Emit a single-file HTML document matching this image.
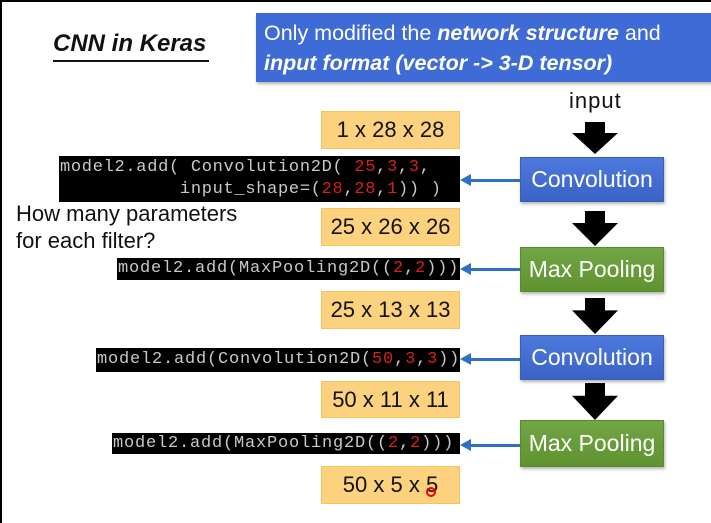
<!DOCTYPE html>
<html><head><meta charset="utf-8"><style>
body{margin:0;width:711px;height:523px;overflow:hidden;background:#fff;position:relative;font-family:"Liberation Sans",sans-serif}
.a{position:absolute}
.or{position:absolute;left:321px;width:139px;background:#fdd27e;border:1px solid #f6c45e;box-sizing:border-box;font-size:22px;color:#111;display:flex;align-items:center;justify-content:center}
.bx{position:absolute;left:520px;width:144px;box-sizing:border-box;color:#fff;font-size:23px;display:flex;align-items:center;justify-content:center;box-shadow:1px 2px 3px rgba(0,0,0,.3)}
.bl{background:linear-gradient(#4d78dc,#3a63c8);border:1px solid #3a5fb8}
.gr{background:linear-gradient(#72a543,#5f9331);border:1px solid #5a8a30}
.cd{position:absolute;background:#000;color:#c8c8c8;font-family:"Liberation Mono",monospace;font-size:17px;white-space:pre;right:251px;box-sizing:border-box;padding-left:1px;letter-spacing:.7px}
.r{color:#d8201c}
.ar{position:absolute;left:572px;width:46px}
.ln{position:absolute;left:466px;width:54px;height:3px;background:#2f6fc6}
.lh{position:absolute;left:460px;width:0;height:0;border-top:6px solid transparent;border-bottom:6px solid transparent;border-right:11px solid #2f6fc6}
</style></head><body>
<div class="a" style="left:0;top:0;width:2px;height:523px;background:#000"></div>
<div class="a" style="left:0;top:0;width:711px;height:2px;background:#000"></div>
<div class="a" style="left:53px;top:30px;font-size:24px;font-weight:bold;font-style:italic;color:#111;white-space:nowrap">CNN in Keras</div>
<div class="a" style="left:53px;top:60px;width:156px;height:2px;background:#111"></div>
<div class="a" style="left:256px;top:13px;width:460px;height:69px;background:#3f6bd6;box-shadow:1px 2px 3px rgba(0,0,0,.3)"></div>
<div class="a" style="left:264px;top:18px;color:#fff;font-size:21.5px;line-height:30px;white-space:nowrap">Only modified the <b><i>network structure</i></b> and<br><b><i>input format (vector -&gt; 3-D tensor)</i></b></div>
<div class="a" style="left:569px;top:88px;font-size:22px;letter-spacing:1px;color:#111">input</div>

<svg class="ar" style="top:122px" height="32" viewBox="0 0 46 32"><path d="M13 0H33V11H46L23 32L0 11H13Z" fill="#000"/></svg>
<svg class="ar" style="top:211px" height="35" viewBox="0 0 46 32" preserveAspectRatio="none"><path d="M13 0H33V11H46L23 32L0 11H13Z" fill="#000"/></svg>
<svg class="ar" style="top:298px" height="36" viewBox="0 0 46 32" preserveAspectRatio="none"><path d="M13 0H33V11H46L23 32L0 11H13Z" fill="#000"/></svg>
<svg class="ar" style="top:383px" height="37" viewBox="0 0 46 32" preserveAspectRatio="none"><path d="M13 0H33V11H46L23 32L0 11H13Z" fill="#000"/></svg>

<div class="bx bl" style="top:157px;height:45px">Convolution</div>
<div class="bx gr" style="top:247px;height:45px">Max Pooling</div>
<div class="bx bl" style="top:335px;height:45px">Convolution</div>
<div class="bx gr" style="top:420px;height:47px">Max Pooling</div>

<div class="or" style="top:111px;height:38px">1 x 28 x 28</div>
<div class="or" style="top:208px;height:38px">25 x 26 x 26</div>
<div class="or" style="top:291px;height:38px">25 x 13 x 13</div>
<div class="or" style="top:381px;height:37px">50 x 11 x 11</div>
<div class="or" style="top:466px;height:38px">50 x 5 x 5</div>
<div class="a" style="left:426px;top:487px;width:6px;height:6px;border:2px solid #e00;border-radius:50%"></div>

<div class="cd" style="left:59px;top:156px;height:46px;line-height:22px;padding-top:1px">model2.add( Convolution2D( <span class="r">25</span>,<span class="r">3</span>,<span class="r">3</span>,
           input_shape=(<span class="r">28</span>,<span class="r">28</span>,<span class="r">1</span>)) )</div>
<div class="cd" style="left:117px;top:258px;height:22px;line-height:22px;letter-spacing:.8px">model2.add(MaxPooling2D((<span class="r">2</span>,<span class="r">2</span>)))</div>
<div class="cd" style="left:96px;top:348px;height:24px;line-height:24px;letter-spacing:.8px">model2.add(Convolution2D(<span class="r">50</span>,<span class="r">3</span>,<span class="r">3</span>))</div>
<div class="cd" style="left:112px;top:433px;height:21px;line-height:21px;letter-spacing:.8px">model2.add(MaxPooling2D((<span class="r">2</span>,<span class="r">2</span>)))</div>

<div class="ln" style="top:179px"></div><div class="lh" style="top:174px"></div>
<div class="ln" style="top:268px"></div><div class="lh" style="top:263px"></div>
<div class="ln" style="top:358px"></div><div class="lh" style="top:353px"></div>
<div class="ln" style="top:444px"></div><div class="lh" style="top:439px"></div>

<div class="a" style="left:16px;top:200px;font-size:22px;line-height:27px;color:#111;white-space:nowrap">How many parameters<br>for each filter?</div>
</body></html>
